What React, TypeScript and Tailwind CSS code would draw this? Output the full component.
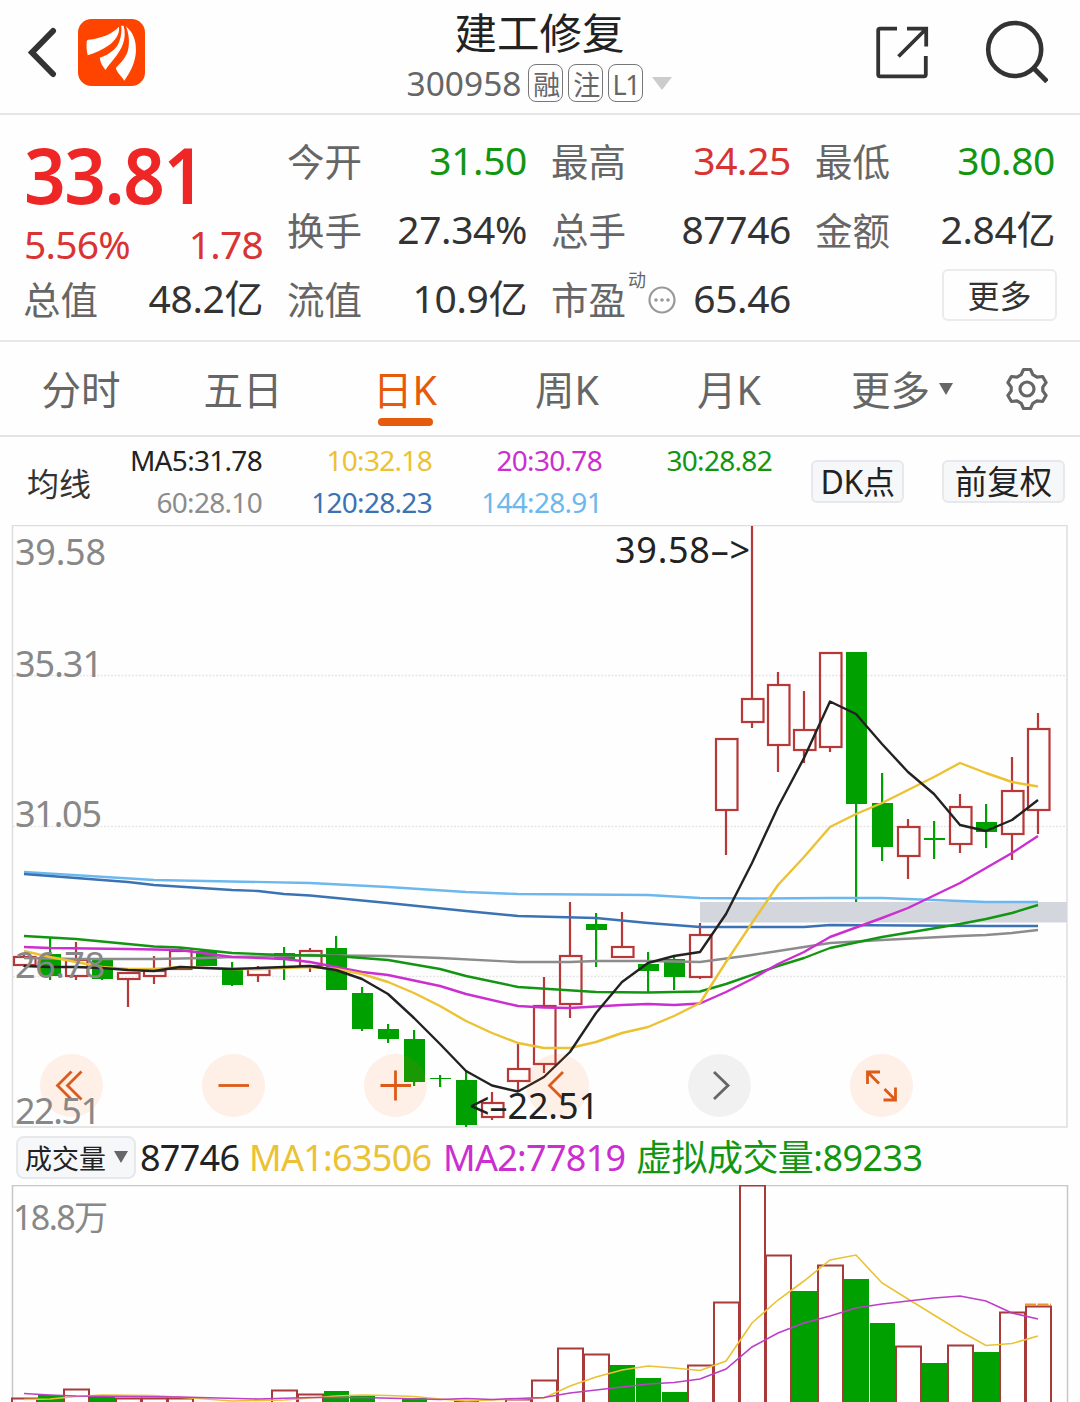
import React from 'react';

type Point = [number, number];

// up, high, bodyTop, bodyBottom, low
type Candle = [boolean, number, number, number, number];

const STEP = 26;
const FIRST_X = 24;
const RED = '#b83838';
const GREEN = '#00a000';

const CANDLES: Candle[] = [
  [true, 955, 957, 965, 967],
  [false, 937, 954, 976, 980],
  [true, 942, 960, 976, 980],
  [false, 958, 960, 979, 980],
  [true, 972, 973, 979, 1007],
  [true, 956, 971, 976, 984],
  [true, 948, 951, 969, 969],
  [false, 951, 951, 966, 966],
  [false, 962, 969, 985, 986],
  [true, 966, 969, 975, 982],
  [false, 947, 953, 959, 980],
  [true, 948, 951, 966, 972],
  [false, 936, 948, 990, 990],
  [false, 987, 993, 1029, 1031],
  [false, 1024, 1029, 1039, 1043],
  [false, 1030, 1039, 1082, 1086],
  [false, 1075, 1078, 1079, 1087],
  [false, 1070, 1080, 1125, 1127],
  [true, 1092, 1103, 1117, 1120],
  [true, 1043, 1069, 1081, 1092],
  [true, 977, 1006, 1064, 1073],
  [true, 902, 956, 1004, 1018],
  [false, 913, 924, 930, 967],
  [true, 912, 947, 957, 957],
  [false, 952, 964, 971, 992],
  [false, 955, 959, 977, 990],
  [true, 923, 935, 977, 979],
  [true, 739, 739, 810, 855],
  [true, 526, 699, 722, 728],
  [true, 672, 685, 745, 772],
  [true, 691, 730, 750, 763],
  [true, 653, 653, 747, 752],
  [false, 652, 652, 804, 902],
  [false, 773, 803, 847, 861],
  [true, 819, 827, 856, 879],
  [false, 821, 838, 840, 859],
  [true, 794, 807, 844, 853],
  [false, 804, 822, 832, 848],
  [true, 757, 791, 834, 860],
  [true, 713, 729, 810, 834],
];

const PRICE_LINES: { color: string; points: Point[] }[] = [
  {
    color: '#6cb8ee',
    points: [[24, 872], [154, 880], [310, 883], [388, 887], [466, 892], [518, 894], [648, 895], [700, 898], [752, 898.5], [830, 898], [882, 898], [986, 902], [1038, 902]],
  },
  {
    color: '#3a72b4',
    points: [[24, 874], [128, 882], [154, 885], [232, 890], [258, 891], [284, 894], [310, 895.5], [336, 898], [388, 903], [466, 911], [518, 916], [596, 918], [648, 923], [700, 927], [804, 927], [830, 925], [986, 926], [1038, 926]],
  },
  {
    color: '#8c8c8c',
    points: [[24, 958], [76, 959], [154, 959], [206, 958], [232, 957], [284, 956], [310, 955], [336, 955.5], [388, 956], [440, 958], [518, 962], [570, 962], [596, 961], [648, 961], [700, 962], [752, 955], [804, 947], [830, 943], [882, 940], [960, 936], [986, 935], [1012, 933], [1038, 930]],
  },
  {
    color: '#129612',
    points: [[24, 936], [76, 939], [154, 946.5], [180, 947.5], [232, 953], [284, 955], [336, 956], [388, 960], [440, 969], [466, 976], [518, 987], [596, 992], [648, 992.5], [700, 991.5], [726, 984], [778, 966], [804, 958], [830, 948], [882, 937], [960, 924], [986, 919], [1012, 913], [1038, 905]],
  },
  {
    color: '#cb2fd0',
    points: [[24, 947], [50, 948], [128, 949], [180, 950], [232, 957], [284, 959], [310, 962], [336, 967], [362, 972], [388, 975], [440, 986], [466, 994], [518, 1006], [544, 1007.5], [570, 1008], [622, 1005], [648, 1004], [674, 1005], [700, 1003.5], [726, 992], [752, 979], [778, 964], [804, 952], [830, 937], [882, 918], [908, 908], [960, 883], [1012, 853], [1038, 836]],
  },
  {
    color: '#eac233',
    points: [[24, 951], [50, 957], [76, 962], [102, 967], [128, 969], [154, 969], [180, 967], [206, 968], [232, 969], [258, 969], [284, 968], [310, 967], [336, 969], [362, 974], [388, 982], [414, 993], [440, 1006], [466, 1021], [492, 1033], [518, 1043], [544, 1048], [570, 1048], [596, 1042], [622, 1033], [648, 1027], [674, 1016], [700, 1003], [726, 962], [752, 923], [778, 885], [804, 857], [830, 827], [856, 814], [882, 803], [908, 790], [934, 777], [960, 763], [986, 773], [1012, 782], [1038, 786.5]],
  },
  {
    color: '#222222',
    points: [[24, 966], [50, 967], [76, 967], [102, 968], [128, 970], [154, 971], [180, 967], [206, 968], [232, 969], [258, 968], [284, 967], [310, 966], [336, 970], [362, 979], [388, 994], [414, 1018], [440, 1044], [466, 1071], [492, 1085.5], [518, 1091.5], [544, 1077], [570, 1052], [596, 1013], [622, 982], [648, 963], [674, 956], [700, 952], [726, 914], [752, 863], [778, 807], [804, 758], [830, 701.5], [856, 714], [882, 744], [908, 772], [934, 794], [960, 825], [986, 831], [1012, 820], [1038, 800]],
  },
];

// up, top
const VOLUMES: [boolean, number][] = [
  [true, 1398], [false, 1395], [true, 1389], [false, 1396], [true, 1398], [true, 1398], [true, 1398],
  [true, 1403], [true, 1403], [true, 1403], [true, 1390], [true, 1394], [false, 1391], [false, 1396],
  [true, 1403], [false, 1398], [true, 1403], [false, 1401], [true, 1403], [true, 1399], [true, 1380],
  [true, 1348], [true, 1354], [false, 1365], [false, 1378], [false, 1392], [true, 1365], [true, 1302],
  [true, 1185], [true, 1255], [false, 1291], [true, 1265], [false, 1279], [false, 1323], [true, 1346],
  [false, 1363], [true, 1345], [false, 1352], [true, 1312], [true, 1306],
];

const VOLUME_LINES: { color: string; points: Point[] }[] = [
  {
    color: '#eac233',
    points: [[24, 1399.5], [50, 1399], [76, 1396.5], [102, 1395], [154, 1395.5], [206, 1399], [232, 1401], [284, 1400], [310, 1398], [336, 1396], [362, 1395], [388, 1395.5], [414, 1396.5], [440, 1399], [466, 1401], [544, 1398], [570, 1386], [596, 1377], [622, 1370], [648, 1366], [674, 1368], [700, 1370.5], [726, 1361], [752, 1323], [778, 1300], [804, 1281], [830, 1260], [856, 1255], [882, 1283], [908, 1299], [934, 1315], [960, 1331], [986, 1345.5], [1012, 1343.5], [1038, 1336]],
  },
  {
    color: '#bb3fc8',
    points: [[24, 1393.5], [50, 1395], [76, 1396], [180, 1397], [258, 1399], [310, 1397.5], [362, 1397.5], [440, 1399.5], [466, 1398.5], [492, 1399.5], [518, 1398.5], [544, 1397.5], [570, 1393], [596, 1390], [622, 1387], [648, 1384], [674, 1382.5], [700, 1379], [726, 1369], [752, 1347], [778, 1333], [804, 1323], [830, 1316], [856, 1308], [882, 1304], [908, 1301], [934, 1298], [960, 1296], [986, 1301], [1012, 1313], [1038, 1319]],
  },
];

const AXIS_LABELS = [
  { text: '39.58', y: 565, width: 88 },
  { text: '35.31', y: 677, width: 85 },
  { text: '31.05', y: 827, width: 84 },
  { text: '26.78', y: 978, width: 87 },
  { text: '22.51', y: 1124, width: 83 },
];

const toPoints = (points: Point[]) => points.map((p) => p.join(',')).join(' ');

const BackIcon: React.FC = () => (
  <svg className="h-[52px] w-8" viewBox="0 0 32 52" fill="none" stroke="#333" strokeWidth="6" strokeLinecap="round">
    <path d="M28 4 7 25.500 28 47" />
  </svg>
);

const BrandLogo: React.FC = () => (
  <svg className="size-[67px]" viewBox="0 0 200 200">
    <rect width="200" height="200" rx="40" fill="#ff4400" />
    <g fill="#fff">
      <path d="M32 62C66 58 102 46 122 23c4 19-10 42-30 55-20 13-42 24-63 30-4-13-4-30-3-41 1-3 2-5 6-5Z" />
      <path d="M129 20h7c11 40-6 70-26 96-9 12-20 23-28 36-9-11-16-22-17-36 28-10 50-26 58-48 6-16 8-32 6-48Z" />
      <path d="M143 22c22 18 31 44 30 74-2 34-17 64-35 88-8-14-21-22-25-38 14-15 30-30 36-52 6-24 3-50-6-72Z" />
    </g>
  </svg>
);

const ShareIcon: React.FC = () => (
  <svg className="size-[54px]" viewBox="0 0 54 54" fill="none" stroke="#333" strokeWidth="3.8">
    <path d="M22 3.700H5a1.800 1.800 0 0 0-1.800 1.800v44a1.800 1.800 0 0 0 1.800 1.800h44a1.800 1.800 0 0 0 1.800-1.800V31" />
    <path d="M32 3.700h19.200V21.500M51 4 23.500 31.500" />
  </svg>
);

const SearchIcon: React.FC = () => (
  <svg className="size-16" viewBox="0 0 64 64" fill="none" stroke="#333">
    <circle cx="30.700" cy="30.500" r="26.500" strokeWidth="4.600" />
    <path d="M49 48.500 63 62.500" strokeWidth="5" />
  </svg>
);

const GearIcon: React.FC = () => (
  <svg className="h-11 w-11" viewBox="0 0 44 44" fill="none" stroke="#666" strokeWidth="3.200" strokeLinejoin="round">
    <path d="M18.500 2.500h7l2.300 5.200 4.200 2.400 5.600-.6 3.500 6-3.300 4.600v3.800l3.300 4.600-3.500 6-5.600-.6-4.200 2.400-2.300 5.200h-7l-2.300-5.200-4.200-2.400-5.600.6-3.500-6 3.300-4.600v-3.800l-3.300-4.600 3.500-6 5.600.6 4.200-2.400Z" />
    <circle cx="22" cy="22" r="7" />
  </svg>
);

interface QuoteCellProps {
  label: string;
  value: string;
  tone?: string;
  extra?: React.ReactNode;
}

const QuoteCell: React.FC<QuoteCellProps> = ({ label, value, tone = 'text-[#333]', extra }) => (
  <div className="flex h-[69px] items-center justify-between whitespace-nowrap">
    <span className="relative -ml-px pt-[3px] text-[37.500px] text-[#666]">
      {label}
      {extra}
    </span>
    <span className={`text-[39px] tracking-[-0.01em] ${tone}`}>{value}</span>
  </div>
);

const Header: React.FC = () => (
  <header className="flex h-[115px] items-start justify-between border-b-2 border-[#e4e6e7] pr-8 pl-[25px]">
    <div className="mt-[19px] flex w-[240px] items-center gap-[21px]">
      <BackIcon />
      <BrandLogo />
    </div>
    <div className="flex flex-col items-center pt-2.5 pl-1.5">
      <h1 className="text-[42.500px] leading-[46px] text-[#222]">建工修复</h1>
      <div className="mt-2 flex items-center gap-[5px] text-[#666]">
        <span className="mr-0.5 text-[33.500px] leading-[38px]">300958</span>
        {['融', '注', 'L1'].map((tag) => (
          <span key={tag} className="flex h-[38px] w-[35px] items-center justify-center rounded-lg border-[1.500px] border-[#777] pt-0.5 text-[27px] leading-none tracking-tighter">
            {tag}
          </span>
        ))}
        <span className="ml-1 h-0 w-0 border-x-[10px] border-t-[13px] border-x-transparent border-t-[#ccc]" />
      </div>
    </div>
    <div className="flex w-[240px] justify-end gap-[55px] pt-[19px]">
      <div className="pt-[6px]">
        <ShareIcon />
      </div>
      <SearchIcon />
    </div>
  </header>
);

const Quote: React.FC = () => (
  <section className="h-[227px] border-b-2 border-[#e8e8e8] pt-[11px] pl-6">
    <div className="grid grid-cols-[239px_239px_239px_239px] gap-x-[25px]">
      <div>
        <div className="flex h-[93px] origin-left scale-x-[0.935] items-center pt-0.5 text-[78px] leading-none font-semibold tracking-[-0.02em] text-[#ee2626]">33.81</div>
        <div className="flex h-[45px] items-center justify-between pt-1 text-[39px] leading-none tracking-[-0.02em] text-[#d93434]">
          <span>5.56%</span>
          <span>1.78</span>
        </div>
        <QuoteCell label="总值" value="48.2亿" />
      </div>
      <div>
        <QuoteCell label="今开" value="31.50" tone="text-[#129612]" />
        <QuoteCell label="换手" value="27.34%" />
        <QuoteCell label="流值" value="10.9亿" />
      </div>
      <div>
        <QuoteCell label="最高" value="34.25" tone="text-[#d93434]" />
        <QuoteCell label="总手" value="87746" />
        <QuoteCell
          label="市盈"
          value="65.46"
          extra={
            <>
              <span className="absolute top-0.5 left-[77px] text-[18px] leading-none">动</span>
              <svg className="absolute top-[17px] left-[97px] size-7" viewBox="0 0 28 28">
                <circle cx="14" cy="14" r="12.500" fill="none" stroke="#999" strokeWidth="2.200" />
                <g fill="#999">
                  <circle cx="8" cy="14" r="1.800" />
                  <circle cx="14" cy="14" r="1.800" />
                  <circle cx="20" cy="14" r="1.800" />
                </g>
              </svg>
            </>
          }
        />
      </div>
      <div>
        <QuoteCell label="最低" value="30.80" tone="text-[#129612]" />
        <QuoteCell label="金额" value="2.84亿" />
        <div className="mt-[5px] flex justify-end">
          <button className="-mr-0.5 h-[52px] w-[115px] rounded-md border-2 border-[#ebebeb] pt-0.5 text-[32px] leading-none text-[#333]">更多</button>
        </div>
      </div>
    </div>
  </section>
);

const Tabs: React.FC = () => (
  <nav className="flex h-[95px] border-b-2 border-[#e4e4e4] text-[39.500px] text-[#666]">
    {['分时', '五日', '日K', '周K', '月K'].map((tab) => (
      <div key={tab} className={`relative flex w-[162px] items-center justify-center pt-[5px] ${tab === '日K' ? 'text-[#e65a0c]' : ''}`}>
        {tab}
        {tab === '日K' && <span className="absolute bottom-[9px] h-2 w-[55px] rounded-full bg-[#e65a0c]" />}
      </div>
    ))}
    <div className="flex flex-1 items-center pl-[41px]">
      <span className="pt-[5px]">更多</span>
      <span className="ml-[9px] h-0 w-0 border-x-[7.500px] border-t-[12px] border-x-transparent border-t-[#666]" />
      <span className="ml-[52px]">
        <GearIcon />
      </span>
    </div>
  </nav>
);

const Averages: React.FC = () => (
  <div className="flex h-[88px] items-center pr-[15px] pl-[27px]">
    <span className="mt-1.5 w-[65px] text-[32px] text-[#333]">均线</span>
    <div className="grid grid-cols-[170px_170px_170px_170px] text-right text-[28px] leading-[42px] tracking-[-0.025em]">
      <span className="text-[#222]">MA5:31.78</span>
      <span className="text-[#eac233]">10:32.18</span>
      <span className="text-[#cb2fd0]">20:30.78</span>
      <span className="text-[#129612]">30:28.82</span>
      <span className="text-[#8c8c8c]">60:28.10</span>
      <span className="text-[#3a72b4]">120:28.23</span>
      <span className="text-[#6cb8ee]">144:28.91</span>
    </div>
    <button className="ml-[39px] h-[43px] w-[93px] shrink-0 rounded-md border-2 border-[#e6e8ec] bg-[#f6f7f9] pt-0.5 text-[32px] leading-none tracking-[-0.01em] whitespace-nowrap text-[#222]">DK点</button>
    <button className="ml-[38px] h-[43px] w-[123px] shrink-0 rounded-md border-2 border-[#e6e8ec] bg-[#f6f7f9] pt-[3px] text-[32.500px] leading-none whitespace-nowrap text-[#222]">前复权</button>
  </div>
);

const CONTROLS: { name: string; path: string; muted?: boolean }[] = [
  { name: 'first', path: 'M31.500 17.500 17.500 31.500 31.500 45.500M41.500 17.500 27.500 31.500 41.500 45.500' },
  { name: 'zoom out', path: 'M16.500 31.500H47' },
  { name: 'zoom in', path: 'M16.500 31.500H47M31.500 16.500V46.500' },
  { name: 'previous', path: 'M37 18 23.500 31.500 37 45' },
  { name: 'next', path: 'M26 18 40 31.500 26 45', muted: true },
  { name: 'expand', path: 'M17.500 30V18H30M18 18.500 29 29.500M45.500 33.500V46H33.500M45 45.500 34.500 35' },
];

const PriceChart: React.FC = () => (
  <div className="relative h-[605px]">
    <svg className="block h-full w-full" viewBox="0 525 1080 605">
      <rect x="12.500" y="525.500" width="1054.500" height="601.500" fill="none" stroke="#dedede" strokeWidth="1.500" />
      {[675.5, 826.5, 976.5].map((y) => (
        <line key={y} x1="13" x2="1066" y1={y} y2={y} stroke="#e6e6e6" strokeWidth="1.500" strokeDasharray="2 1.500" />
      ))}
      <rect x="700" y="902" width="367" height="20.500" fill="#d3d6dc" />
      {CANDLES.map(([up, high, top, bottom, low], i) => {
        const x = FIRST_X + i * STEP;
        return up ? (
          <g key={i} stroke={RED} strokeWidth="2.200" fill="none">
            <path d={`M${x} ${high}V${top}M${x} ${bottom}V${low}`} />
            <rect x={x - 10} y={top} width="21.500" height={bottom - top} />
          </g>
        ) : (
          <g key={i} fill={GREEN}>
            <rect x={x - 1} y={high} width="2.200" height={low - high} />
            <rect x={x - 10} y={top} width="21" height={bottom - top} />
          </g>
        );
      })}
      {PRICE_LINES.map(({ color, points }) => (
        <polyline key={color} points={toPoints(points)} fill="none" stroke={color} strokeWidth="2.400" strokeLinejoin="round" />
      ))}
    </svg>
    <div className="absolute bottom-[13px] left-10 flex gap-[99px]">
      {CONTROLS.map(({ name, path, muted }) => (
        <button key={name} aria-label={name} className={`size-[63px] rounded-full ${muted ? 'bg-black/5 text-[#666]' : 'bg-[#ff6414]/10 text-[#dd5a18]'}`}>
          <svg viewBox="0 0 63 63" fill="none" stroke="currentColor" strokeWidth="2.800">
            <path d={path} />
          </svg>
        </button>
      ))}
    </div>
    <svg className="absolute inset-0 h-full w-full" viewBox="0 525 1080 605" fontSize="36">
      {AXIS_LABELS.map(({ text, y, width }) => (
        <text key={text} x="15" y={y} textLength={width + 3} fill="#888">
          {text}
        </text>
      ))}
      <g fill="#222">
        <text x="615" y="563" textLength="135">39.58–&gt;</text>
        <text x="469" y="1119" textLength="130">&lt;–22.51</text>
      </g>
    </svg>
  </div>
);

const VolumeBar: React.FC = () => (
  <div className="flex h-[55px] items-center pl-4 text-[36px] leading-none tracking-[-0.02em] whitespace-nowrap">
    <button className="flex h-[43px] w-[120px] items-center gap-2 rounded-lg border-2 border-[#e6e8ec] bg-[#f6f7f9] pt-0.5 pl-[7px] text-[27px] tracking-normal text-[#222]">
      成交量
      <span className="-mt-1 h-0 w-0 border-x-[7px] border-t-[12px] border-x-transparent border-t-[#666]" />
    </button>
    <span className="ml-1 w-[109px] text-[#222]">87746</span>
    <span className="w-[194px] text-[#eac233]">MA1:63506</span>
    <span className="w-[193px] text-[#cb2fd0]">MA2:77819</span>
    <span className="tracking-[-0.015em] text-[#129612]">虚拟成交量:89233</span>
  </div>
);

const VolumeChart: React.FC = () => (
  <svg className="block h-[217px] w-full" viewBox="0 1185 1080 217">
    <path d="M12.500 1402V1185.500H1067.500V1402" fill="none" stroke="#c8c8c8" strokeWidth="1.500" />
    <text x="13" y="1230" fontSize="34" textLength="95" fill="#888">18.8万</text>
    {VOLUMES.map(([up, top], i) => {
      const x = FIRST_X + i * STEP;
      return up ? (
        <rect key={i} x={x - 10.5} y={top + 0.5} width="25" height="240" fill="#fff" stroke="#a83a3a" strokeWidth="2" transform="translate(-1.500 0)" />
      ) : (
        <rect key={i} x={x - 12} y={top} width="25" height="240" fill={GREEN} />
      );
    })}
    <path d="M1025 1304.500H1051" stroke="#e8962c" strokeWidth="2" strokeDasharray="11 1.500" />
    {VOLUME_LINES.map(({ color, points }) => (
      <polyline key={color} points={toPoints(points)} fill="none" stroke={color} strokeWidth="1.600" />
    ))}
  </svg>
);

export default function App() {
  return (
    <main className="h-[1402px] w-[1080px] overflow-hidden bg-[#fefefe] font-['Noto_Sans','Noto_Sans_CJK_SC',sans-serif]">
      <Header />
      <Quote />
      <Tabs />
      <Averages />
      <PriceChart />
      <VolumeBar />
      <VolumeChart />
    </main>
  );
}
